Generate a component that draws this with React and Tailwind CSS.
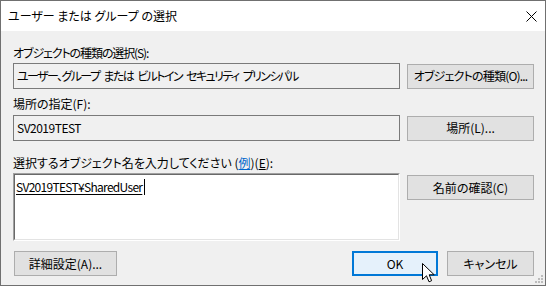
import React from 'react';

const Btn = ({ children, className = '' }) => (
  <button className={`flex items-center justify-center whitespace-nowrap h-[25px] border border-[#adadad] bg-[#e1e1e1] ${className}`}>
    {children}
  </button>
);

const ReadBox = ({ children }) => (
  <div className="w-[387px] h-[26px] border border-[#7a7a7a] bg-[#f0f0f0] pl-[3px] flex items-center whitespace-nowrap">
    {children}
  </div>
);

export default function App() {
  return (
    <div className="relative w-[546px] h-[286px] border border-[#707070] bg-[#f0f0f0] flex flex-col font-['Noto_Sans_CJK_JP',sans-serif] text-[12px] leading-[16px] text-black [font-feature-settings:'palt']">
      {/* title bar */}
      <div className="h-[30px] bg-white flex items-center justify-between pl-[7px] pr-[8px]">
        <span>ユーザー または グループ の選択</span>
        <svg width="11" height="11" viewBox="0 0 11 11">
          <path d="M0.5 0.5 L10.5 10.5 M10.5 0.5 L0.5 10.5" stroke="#000" strokeWidth="1" />
        </svg>
      </div>

      <div className="flex-1 pl-[12px] pt-[14px] flex flex-col">
        <div className="tracking-[-1.1px]">オブジェクトの種類の選択(S):</div>
        <div className="mt-[2px] flex items-center">
          <ReadBox>
            <span className="tracking-[-1.6px] [word-spacing:3px]">ユーザー、グループ または ビルトイン セキュリティ プリンシパル</span>
          </ReadBox>
          <Btn className="ml-[7px] w-[127px] tracking-[-0.8px]">オブジェクトの種類(O)...</Btn>
        </div>

        <div className="mt-[7px]">場所の指定(F):</div>
        <div className="mt-[3px] flex items-center">
          <ReadBox>
            <span className="tracking-[-0.5px]">SV2019TEST</span>
          </ReadBox>
          <Btn className="ml-[7px] w-[127px]">場所(L)...</Btn>
        </div>

        <div className="mt-[14px]">
          選択するオブジェクト名を入力してください (<span className="text-[#0066cc] underline">例</span>)(<span className="underline">E</span>):
        </div>
        <div className="mt-[2px] flex items-start">
          <div className="w-[387px] h-[68px] border-t border-l border-[#a0a0a0] border-r-white border-b-white border-r border-b">
            <div className="h-full border-t border-l border-[#696969] border-r-[#e3e3e3] border-b-[#e3e3e3] border-r border-b bg-white pl-[1px] pt-[4px] flex items-start">
              <span className="underline underline-offset-[2px] tracking-[-0.7px]">SV2019TEST¥SharedUser</span>
              <span className="inline-block w-[1px] h-[16px] bg-black ml-[2px]" />
            </div>
          </div>
          <Btn className="ml-[7px] mt-[2px] w-[127px]">名前の確認(C)</Btn>
        </div>

        <div className="mt-[10px] flex items-center">
          <Btn className="ml-[1px] w-[103px]">詳細設定(A)...</Btn>
          <button className="ml-[235px] w-[86px] h-[25px] flex items-center justify-center border-2 border-[#0078d7] bg-[#e5f1fb]">
            OK
          </button>
          <Btn className="ml-[9px] w-[87px]">キャンセル</Btn>
        </div>
      </div>

      {/* mouse pointer */}
      <svg className="absolute left-[421px] top-[262px]" width="13" height="20" viewBox="0 0 13 20">
        <path d="M0.5 0.5 L0.5 16.5 L4.5 12.8 L7 18.8 L9.6 17.7 L7.2 11.8 L12.2 11.8 Z" fill="#fff" stroke="#000" strokeWidth="1" strokeLinejoin="miter" />
      </svg>

      {/* size grip */}
      <svg className="absolute right-[1px] bottom-[1px]" width="9" height="9" viewBox="0 0 9 9">
        <g fill="#bcbcbc">
          <rect x="6" y="0" width="2" height="2" />
          <rect x="3" y="3" width="2" height="2" />
          <rect x="6" y="3" width="2" height="2" />
          <rect x="0" y="6" width="2" height="2" />
          <rect x="3" y="6" width="2" height="2" />
          <rect x="6" y="6" width="2" height="2" />
        </g>
      </svg>
    </div>
  );
}
